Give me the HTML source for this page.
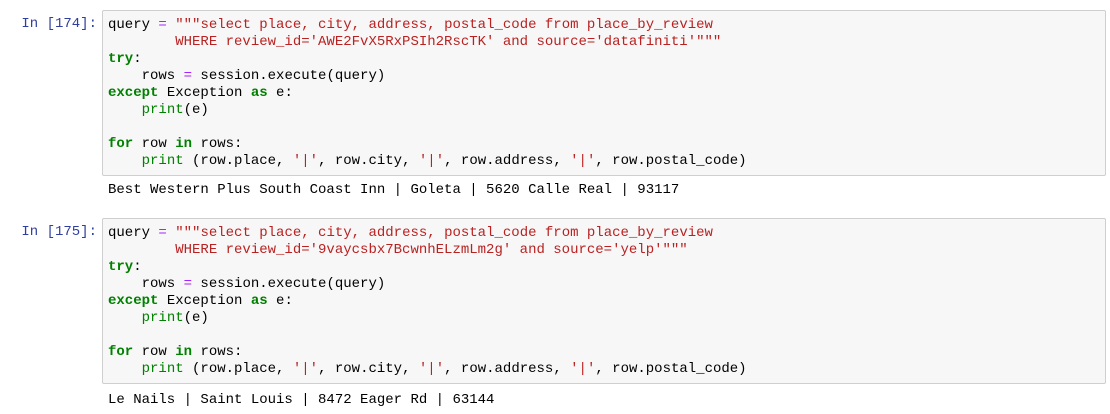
<!DOCTYPE html>
<html><head><style>
body{margin:0;background:#fff;width:1110px;height:414px;overflow:hidden;font-family:"Liberation Mono",monospace;font-size:14px;}
.cell{position:absolute;left:0;width:1110px;}
.prompt{position:absolute;left:0;width:97px;text-align:right;color:#303F9F;line-height:17px;}
.box{position:absolute;left:102px;width:1002px;background:#f7f7f7;border:1px solid #cfcfcf;border-radius:2px;}
pre{margin:0;padding:6px 5px 4px;font-family:inherit;font-size:14px;line-height:17px;color:#000;}
.out{position:absolute;left:108px;line-height:17px;white-space:pre;}
.k{color:#008000;font-weight:bold}.s{color:#BA2121}.o{color:#AA22FF}.b{color:#008000}
</style></head><body>
<div class="cell" style="top:10px">
<div class="prompt" style="top:6px">In [174]:</div>
<div class="box" style="top:0;height:164px"><pre>query <span class="o">=</span> <span class="s">"""select place, city, address, postal_code from place_by_review
        WHERE review_id='AWE2FvX5RxPSIh2RscTK' and source='datafiniti'"""</span>
<span class="k">try</span>:
    rows <span class="o">=</span> session.execute(query)
<span class="k">except</span> Exception <span class="k">as</span> e:
    <span class="b">print</span>(e)

<span class="k">for</span> row <span class="k">in</span> rows:
    <span class="b">print</span> (row.place, <span class="s">'|'</span>, row.city, <span class="s">'|'</span>, row.address, <span class="s">'|'</span>, row.postal_code)</pre></div>
<div class="out" style="top:172px">Best Western Plus South Coast Inn | Goleta | 5620 Calle Real | 93117</div>
</div>
<div class="cell" style="top:218px">
<div class="prompt" style="top:6px">In [175]:</div>
<div class="box" style="top:0;height:164px"><pre>query <span class="o">=</span> <span class="s">"""select place, city, address, postal_code from place_by_review
        WHERE review_id='9vaycsbx7BcwnhELzmLm2g' and source='yelp'"""</span>
<span class="k">try</span>:
    rows <span class="o">=</span> session.execute(query)
<span class="k">except</span> Exception <span class="k">as</span> e:
    <span class="b">print</span>(e)

<span class="k">for</span> row <span class="k">in</span> rows:
    <span class="b">print</span> (row.place, <span class="s">'|'</span>, row.city, <span class="s">'|'</span>, row.address, <span class="s">'|'</span>, row.postal_code)</pre></div>
<div class="out" style="top:174px">Le Nails | Saint Louis | 8472 Eager Rd | 63144</div>
</div>
</body></html>
